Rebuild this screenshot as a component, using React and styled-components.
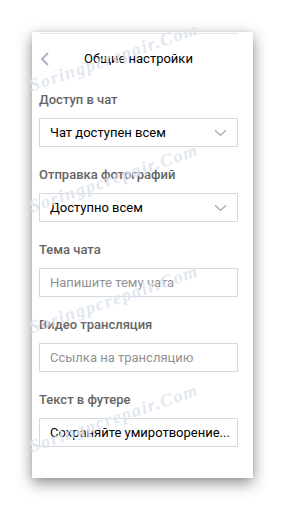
import styled, { createGlobalStyle } from "styled-components";

const Global = createGlobalStyle`
  body {
    margin: 0;
    background: #fff;
    font-family: Roboto, "Noto Sans", sans-serif;
  }
`;

const Page = styled.div`
  position: relative;
  width: 285px;
  height: 511px;
  padding: 32px 0 0 32px;
  box-sizing: border-box;
  overflow: hidden;
`;

const Panel = styled.div`
  width: 221px;
  height: 446px;
  background: #fff;
  box-shadow: 0 5px 14px rgba(0, 0, 0, 0.45), 0 0 4px rgba(0, 0, 0, 0.08);
  padding: 1px 15px 0 7px;
  box-sizing: border-box;
`;

const Inner = styled.div`
  border-top: 1px solid #e2e4e7;
`;

const Header = styled.div`
  position: relative;
  height: 48px;
  display: flex;
  align-items: center;
  justify-content: center;
  font-size: 13px;
  color: #000;
`;

const Back = styled.svg`
  position: absolute;
  left: 1px;
  top: 18px;
`;

const Field = styled.div`
  padding-top: ${(p) => (p.$first ? "10px" : "20px")};
`;

const Label = styled.div`
  font-size: 13px;
  line-height: 16px;
  font-weight: 500;
  color: #656565;
  margin-bottom: 10px;
`;

const Box = styled.div`
  height: 29px;
  border: 1px solid #d3d9de;
  box-sizing: border-box;
  display: flex;
  align-items: center;
  justify-content: space-between;
  padding: 0 10px 0 10px;
  font-size: 13px;
  color: ${(p) => (p.$placeholder ? "#929292" : "#000")};
  white-space: nowrap;
`;

const Watermark = styled.div`
  position: absolute;
  left: 14px;
  width: 200px;
  text-align: center;
  font-family: "Liberation Serif", serif;
  font-style: italic;
  font-weight: bold;
  font-size: 18px;
  letter-spacing: 1.5px;
  color: rgba(195, 205, 228, 0.5);
  text-shadow: 0 0 1px rgba(255, 255, 255, 0.8);
  transform: rotate(-19deg);
  pointer-events: none;
`;

const Chevron = () => (
  <svg width="13" height="8" viewBox="0 0 13 8">
    <path d="M1 1.2 L6.5 6.3 L12 1.2" fill="none" stroke="#a6aeb9" strokeWidth="1.3" />
  </svg>
);

const fields = [
  { label: "Доступ в чат", value: "Чат доступен всем", select: true },
  { label: "Отправка фотографий", value: "Доступно всем", select: true },
  { label: "Тема чата", value: "Напишите тему чата", placeholder: true },
  { label: "Видео трансляция", value: "Ссылка на трансляцию", placeholder: true },
  { label: "Текст в футере", value: "Сохраняйте умиротворение..." },
];

export default function App() {
  return (
    <Page>
      <Global />
      <Panel>
        <Inner>
          <Header>
            <Back width="10" height="14" viewBox="0 0 10 14">
              <path d="M8 1 L2 7 L8 13" fill="none" stroke="#aab4c2" strokeWidth="2" />
            </Back>
            Общие настройки
          </Header>
          {fields.map((f, i) => (
            <Field key={f.label} $first={i === 0}>
              <Label>{f.label}</Label>
              <Box $placeholder={f.placeholder}>
                <span>{f.value}</span>
                {f.select && <Chevron />}
              </Box>
            </Field>
          ))}
        </Inner>
      </Panel>
      {[58, 179, 300, 419].map((y) => (
        <Watermark key={y} style={{ top: y - 11 }}>
          Soringpcrepair.Com
        </Watermark>
      ))}
    </Page>
  );
}
